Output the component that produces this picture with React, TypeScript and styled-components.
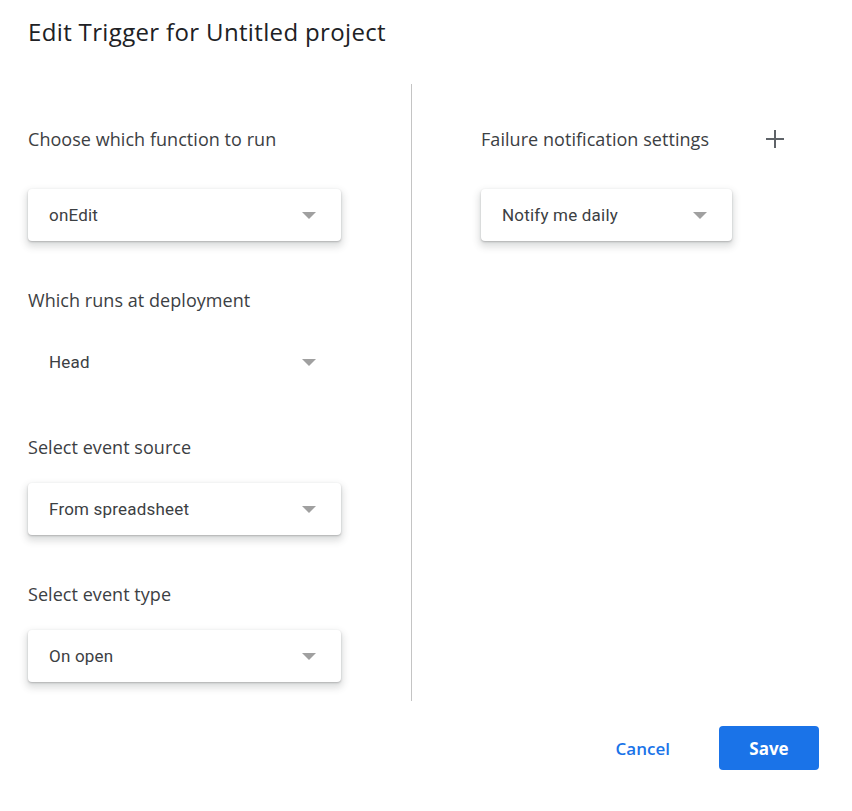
import styled, { createGlobalStyle } from "styled-components";

const GlobalStyle = createGlobalStyle`
  body {
    margin: 0;
    background: #fff;
    font-family: "Open Sans", Roboto, sans-serif;
  }
`;

const Dialog = styled.div`
  width: 852px;
  height: 811px;
  box-sizing: border-box;
  padding: 16px 32px 0 28px;
  display: flex;
  flex-direction: column;
`;

const Title = styled.h1`
  margin: 0;
  font-family: "Open Sans", sans-serif;
  font-size: 24px;
  font-weight: 400;
  line-height: 32px;
  letter-spacing: 0.35px;
  color: #202124;
`;

const Body = styled.div`
  display: flex;
  margin-top: 36px;
`;

const LeftColumn = styled.div`
  width: 383px;
  display: flex;
  flex-direction: column;
  padding-top: 43px;
  padding-bottom: 19px;
`;

const Divider = styled.div`
  width: 1px;
  background: #c4c4c4;
`;

const RightColumn = styled.div`
  flex: 1;
  padding-left: 69px;
  padding-top: 43px;
  display: flex;
  flex-direction: column;
`;

const Group = styled.div<{ $gap: number }>`
  display: flex;
  flex-direction: column;
  gap: ${(p) => p.$gap}px;
  margin-bottom: 47px;
  &:last-child {
    margin-bottom: 0;
  }
`;

const LabelRow = styled.div`
  display: flex;
  align-items: center;
  justify-content: space-between;
  width: 306px;
`;

const Label = styled.div`
  font-family: "Open Sans", sans-serif;
  font-size: 18px;
  line-height: 24px;
  letter-spacing: 0.05px;
  color: #3c4043;
`;

const Select = styled.div<{ $flat?: boolean; $width: number }>`
  width: ${(p) => p.$width}px;
  height: 52px;
  box-sizing: border-box;
  padding: 0 25px 0 21px;
  display: flex;
  align-items: center;
  justify-content: space-between;
  background: #fff;
  border-radius: 4px;
  box-shadow: ${(p) =>
    p.$flat
      ? "none"
      : "0 1px 2px rgba(60, 64, 67, 0.3), 0 4px 7px 2px rgba(60, 64, 67, 0.17)"};
  font-family: Roboto, sans-serif;
  font-size: 17px;
  letter-spacing: 0.2px;
  color: #3c4043;
`;

const Arrow = styled.span`
  width: 0;
  height: 0;
  border-left: 7px solid transparent;
  border-right: 7px solid transparent;
  border-top: 7px solid #a0a0a0;
`;

const PlusButton = styled.button`
  border: none;
  background: none;
  padding: 0;
  width: 24px;
  height: 24px;
  display: flex;
  align-items: center;
  justify-content: center;
  cursor: pointer;
`;

const Footer = styled.div`
  display: flex;
  justify-content: flex-end;
  align-items: center;
  gap: 24px;
  margin-top: 25px;
  padding-right: 1px;
`;

const TextButton = styled.button`
  border: none;
  background: none;
  padding: 0 25px;
  height: 44px;
  font-family: "Open Sans", sans-serif;
  font-size: 17px;
  font-weight: 600;
  color: #1a73e8;
  cursor: pointer;
`;

const PrimaryButton = styled.button`
  border: none;
  border-radius: 4px;
  background: #1a73e8;
  width: 100px;
  height: 44px;
  font-family: "Open Sans", sans-serif;
  font-size: 17px;
  font-weight: 700;
  color: #fff;
  cursor: pointer;
`;

const LEFT = [
  { label: "Choose which function to run", value: "onEdit", gap: 38, flat: false },
  { label: "Which runs at deployment", value: "Head", gap: 24, flat: true },
  { label: "Select event source", value: "From spreadsheet", gap: 24, flat: false },
  { label: "Select event type", value: "On open", gap: 24, flat: false },
];

const App = () => {
  return (
    <>
      <GlobalStyle />
      <Dialog>
        <Title>Edit Trigger for Untitled project</Title>
        <Body>
          <LeftColumn>
            {LEFT.map((item) => (
              <Group key={item.label} $gap={item.gap}>
                <Label>{item.label}</Label>
                <Select $width={313} $flat={item.flat}>
                  {item.value}
                  <Arrow />
                </Select>
              </Group>
            ))}
          </LeftColumn>
          <Divider />
          <RightColumn>
            <Group $gap={38}>
              <LabelRow>
                <Label>Failure notification settings</Label>
                <PlusButton aria-label="Add">
                  <svg width="18" height="18" viewBox="0 0 18 18">
                    <path d="M9 0v18M0 9h18" stroke="#5f6368" strokeWidth="2" />
                  </svg>
                </PlusButton>
              </LabelRow>
              <Select $width={251}>
                Notify me daily
                <Arrow />
              </Select>
            </Group>
          </RightColumn>
        </Body>
        <Footer>
          <TextButton>Cancel</TextButton>
          <PrimaryButton>Save</PrimaryButton>
        </Footer>
      </Dialog>
    </>
  );
};

export default App;
